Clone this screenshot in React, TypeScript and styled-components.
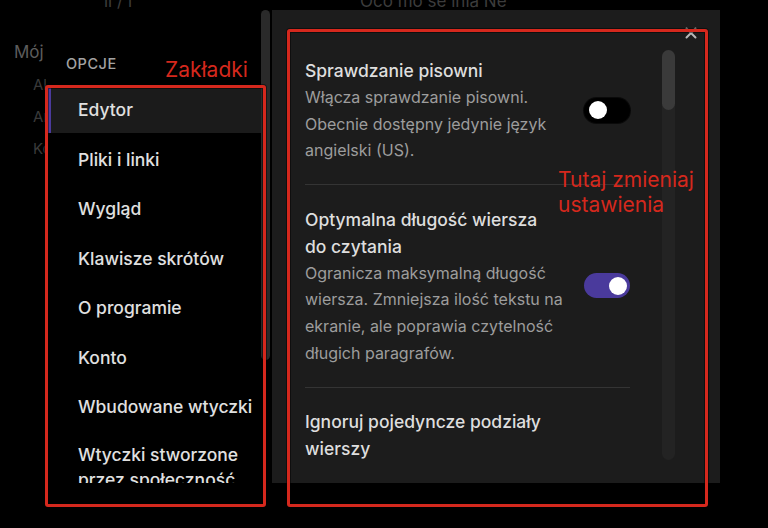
import React from "react";
import styled, { createGlobalStyle } from "styled-components";

const Global = createGlobalStyle`
  html, body { margin: 0; padding: 0; background: #000; }
  body { font-family: Inter, "Liberation Sans", sans-serif; }
`;

const Page = styled.div`
  position: relative;
  width: 768px;
  height: 528px;
  overflow: hidden;
  background: #000;
  font-family: Inter, "Liberation Sans", sans-serif;
`;

/* ---------- app behind the modal ---------- */
const Backdrop = styled.div`
  display: flex;
  flex-direction: column;
`;

const TopStrip = styled.div`
  height: 11px;
  overflow: hidden;
  display: flex;
`;

const FaintHeading = styled.span<{ $indent: number; $width: number }>`
  margin-left: ${(p) => p.$indent}px;
  width: ${(p) => p.$width}px;
  flex-shrink: 0;
  margin-top: -9px;
  font-size: 17px;
  line-height: 20px;
  color: #3c3c3c;
  white-space: nowrap;
`;

const BgNav = styled.div`
  display: flex;
  flex-direction: column;
  padding: 31px 0 0 14px;
`;

const BgTitle = styled.div`
  font-size: 17px;
  line-height: 20px;
  color: #5c5c5c;
  margin-bottom: 7px;
`;

const BgItem = styled.div`
  padding-left: 19px;
  font-size: 15px;
  line-height: 32px;
  color: #3a3a3a;
`;

/* ---------- modal ---------- */
const Modal = styled.div`
  position: absolute;
  left: 46px;
  top: 10px;
  width: 674px;
  height: 473px;
  display: flex;
  background: #000;
  overflow: hidden;
`;

const SideCol = styled.div`
  width: 226px;
  display: flex;
  flex-shrink: 0;
`;

const Nav = styled.nav`
  width: 215px;
  padding-top: 45px;
  display: flex;
  flex-direction: column;
`;

const NavLabel = styled.div`
  padding-left: 20px;
  font-size: 14.5px;
  font-weight: 500;
  line-height: 18px;
  letter-spacing: 0.5px;
  color: #a3a3a3;
  margin-bottom: 15px;
`;

const NavList = styled.div`
  display: flex;
  flex-direction: column;
  gap: 4.5px;
`;

const NavItem = styled.div<{ $active?: boolean }>`
  height: 45px;
  flex-shrink: 0;
  display: flex;
  align-items: center;
  box-sizing: border-box;
  padding-left: 27px;
  padding-bottom: 2px;
  border-left: 5px solid ${(p) => (p.$active ? "#4b3b9d" : "transparent")};
  background: ${(p) => (p.$active ? "#1b1b1b" : "transparent")};
  color: #e0e0e0;
  font-size: 17.5px;
  font-weight: 500;
  line-height: 25px;
`;

const NavItemTwoLine = styled(NavItem)`
  align-items: flex-start;
  padding-top: 7px;
  height: 60px;
`;

const SideScroll = styled.div`
  width: 9px;
  height: 350px;
  border-radius: 5px;
  background: #2a2a2a;
`;

const Panel = styled.section`
  position: relative;
  flex: 1;
  background: #1c1c1c;
  display: flex;
  overflow: hidden;
`;

const SettingsList = styled.div`
  margin-left: 33px;
  width: 325px;
  padding-top: 26.5px;
  display: flex;
  flex-direction: column;
`;

const SettingRow = styled.div<{ $first?: boolean }>`
  display: flex;
  align-items: center;
  justify-content: space-between;
  padding: 20.5px 0;
  border-top: ${(p) => (p.$first ? "none" : "1px solid #343434")};
`;

const Info = styled.div`
  width: 268px;
  display: flex;
  flex-direction: column;
`;

const SettingTitle = styled.div`
  font-size: 17.5px;
  font-weight: 500;
  line-height: 27px;
  color: #dedede;
`;

const SettingDesc = styled.div`
  font-size: 16px;
  line-height: 26.6px;
  color: #9d9d9d;
`;

const Toggle = styled.div<{ $on?: boolean }>`
  position: relative;
  width: 46px;
  height: 25px;
  border-radius: 13px;
  flex-shrink: 0;
  background: ${(p) => (p.$on ? "#4a3a9c" : "#000")};
  box-shadow: ${(p) => (p.$on ? "none" : "0 0 0 1px #0a0a0a")};
`;

const Knob = styled.span<{ $on?: boolean }>`
  position: absolute;
  top: 3.5px;
  left: ${(p) => (p.$on ? "25px" : "5px")};
  width: 18px;
  height: 18px;
  border-radius: 50%;
  background: #fff;
`;

const ScrollTrack = styled.div`
  margin-left: 32px;
  margin-top: 40px;
  width: 13px;
  height: 410px;
  border-radius: 7px;
  background: #232323;
  flex-shrink: 0;
  display: flex;
  flex-direction: column;
`;

const ScrollThumb = styled.div`
  height: 60px;
  border-radius: 7px;
  background: #3a3a3a;
`;

const CloseButton = styled.button`
  position: absolute;
  top: 16px;
  right: 23px;
  width: 13px;
  height: 13px;
  padding: 0;
  border: none;
  background: transparent;
  display: flex;
  align-items: center;
  justify-content: center;
`;

/* ---------- annotations ---------- */
const MarkBox = styled.div<{ $l: number; $t: number; $w: number; $h: number }>`
  position: absolute;
  left: ${(p) => p.$l}px;
  top: ${(p) => p.$t}px;
  width: ${(p) => p.$w}px;
  height: ${(p) => p.$h}px;
  box-sizing: border-box;
  border: 3px solid #d5281d;
  border-radius: 3px;
  box-shadow: 0 0 0 1px rgba(0, 0, 0, 0.45), inset 0 0 0 1px rgba(0, 0, 0, 0.45);
  pointer-events: none;
`;

const MarkLabel = styled.div<{ $l: number; $t: number }>`
  position: absolute;
  left: ${(p) => p.$l}px;
  top: ${(p) => p.$t}px;
  font-size: 21px;
  line-height: 25px;
  color: #d5281d;
  white-space: nowrap;
`;

export default function App() {
  const navItems = [
    "Edytor",
    "Pliki i linki",
    "Wygląd",
    "Klawisze skrótów",
    "O programie",
    "Konto",
    "Wbudowane wtyczki",
  ];
  return (
    <Page>
      <Global />
      <Backdrop>
        <TopStrip>
          <FaintHeading $indent={104} $width={152}>ll / l</FaintHeading>
          <FaintHeading $indent={104} $width={200}>Oco mo se inia Ne</FaintHeading>
        </TopStrip>
        <BgNav>
          <BgTitle>Mój</BgTitle>
          <BgItem>Aktualne</BgItem>
          <BgItem>Archiwum</BgItem>
          <BgItem>Kosz</BgItem>
        </BgNav>
      </Backdrop>

      <Modal>
        <SideCol>
          <Nav>
            <NavLabel>OPCJE</NavLabel>
            <NavList>
              {navItems.map((t, i) => (
                <NavItem key={t} $active={i === 0}>
                  {t}
                </NavItem>
              ))}
              <NavItemTwoLine>
                Wtyczki stworzone
                <br />
                przez społeczność
              </NavItemTwoLine>
            </NavList>
          </Nav>
          <SideScroll />
        </SideCol>

        <Panel>
          <SettingsList>
            <SettingRow $first>
              <Info>
                <SettingTitle>Sprawdzanie pisowni</SettingTitle>
                <SettingDesc>
                  Włącza sprawdzanie pisowni.
                  <br />
                  Obecnie dostępny jedynie język
                  <br />
                  angielski (US).
                </SettingDesc>
              </Info>
              <Toggle>
                <Knob />
              </Toggle>
            </SettingRow>
            <SettingRow>
              <Info>
                <SettingTitle>
                  Optymalna długość wiersza
                  <br />
                  do czytania
                </SettingTitle>
                <SettingDesc>
                  Ogranicza maksymalną długość
                  <br />
                  wiersza. Zmniejsza ilość tekstu na
                  <br />
                  ekranie, ale poprawia czytelność
                  <br />
                  długich paragrafów.
                </SettingDesc>
              </Info>
              <Toggle $on>
                <Knob $on />
              </Toggle>
            </SettingRow>
            <SettingRow>
              <Info>
                <SettingTitle>
                  Ignoruj pojedyncze podziały
                  <br />
                  wierszy
                </SettingTitle>
              </Info>
            </SettingRow>
          </SettingsList>
          <ScrollTrack>
            <ScrollThumb />
          </ScrollTrack>
          <CloseButton aria-label="Zamknij">
            <svg width="12" height="12" viewBox="0 0 12 12">
              <path d="M1.5 1.5 L10.5 10.5 M10.5 1.5 L1.5 10.5" stroke="#b8b8b8" strokeWidth="2" strokeLinecap="round" />
            </svg>
          </CloseButton>
        </Panel>
      </Modal>

      <MarkBox $l={45} $t={85} $w={221} $h={422} />
      <MarkBox $l={287} $t={29} $w={421} $h={478} />
      <MarkLabel $l={165} $t={57}>Zakładki</MarkLabel>
      <MarkLabel $l={558} $t={167}>
        Tutaj zmieniaj
        <br />
        ustawienia
      </MarkLabel>
    </Page>
  );
}
